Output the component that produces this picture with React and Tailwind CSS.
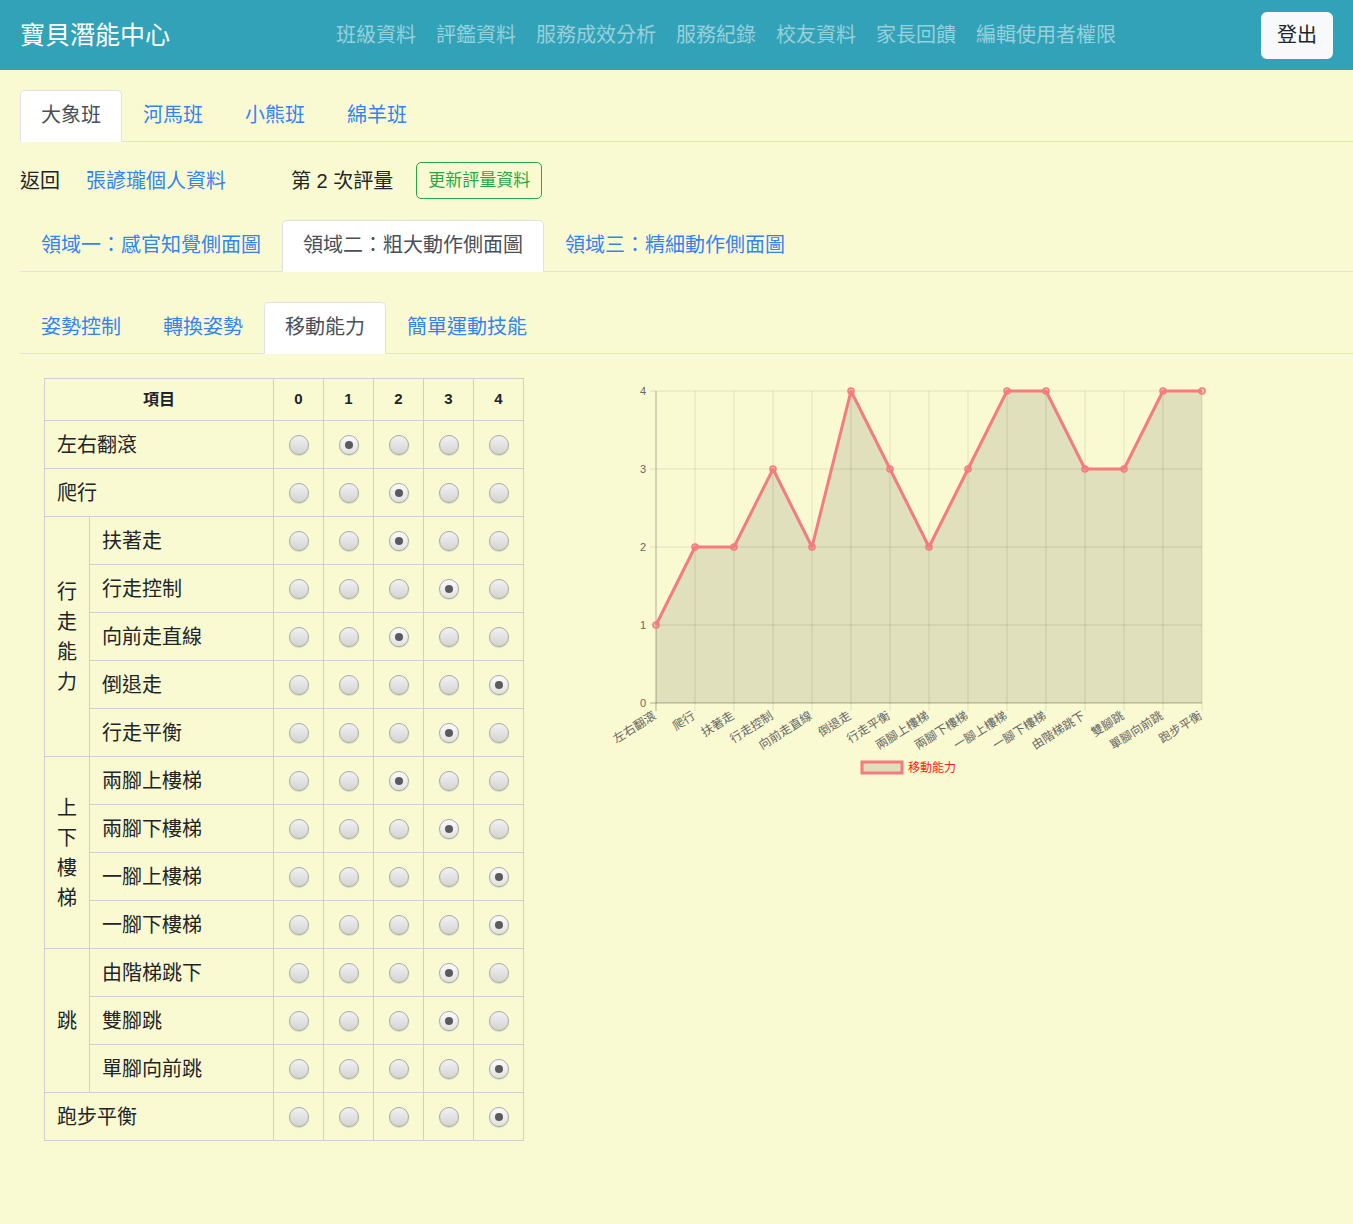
import React from 'react';

const navLinks = ['班級資料', '評鑑資料', '服務成效分析', '服務紀錄', '校友資料', '家長回饋', '編輯使用者權限'];
const classTabs = ['大象班', '河馬班', '小熊班', '綿羊班'];
const domainTabs = ['領域一：感官知覺側面圖', '領域二：粗大動作側面圖', '領域三：精細動作側面圖'];
const subTabs = ['姿勢控制', '轉換姿勢', '移動能力', '簡單運動技能'];

// 每個區塊：group 為 null 表示單列項目
const sections = [
    { group: null, items: [['左右翻滾', 1]] },
    { group: null, items: [['爬行', 2]] },
    { group: '行走能力', items: [['扶著走', 2], ['行走控制', 3], ['向前走直線', 2], ['倒退走', 4], ['行走平衡', 3]] },
    { group: '上下樓梯', items: [['兩腳上樓梯', 2], ['兩腳下樓梯', 3], ['一腳上樓梯', 4], ['一腳下樓梯', 4]] },
    { group: '跳', items: [['由階梯跳下', 3], ['雙腳跳', 3], ['單腳向前跳', 4]] },
    { group: null, items: [['跑步平衡', 4]] },
];

const allItems = sections.flatMap((s) => s.items);

const Tabs = ({ tabs, active }) => (
    <div className="flex border-b border-[#dee2e6]">
        {tabs.map((t, i) => (
            <div
                key={t}
                className={
                    i === active
                        ? 'px-5 py-[10px] text-[20px] leading-[29px] text-[#495057] bg-white border border-[#dee2e6] border-b-white rounded-t-[5px] -mb-px'
                        : 'px-5 py-[10px] text-[20px] leading-[29px] text-[#3483f5] border border-transparent'
                }
            >
                {t}
            </div>
        ))}
    </div>
);

const Radio = ({ checked }) => (
    <div
        className={
            checked
                ? 'mx-auto w-5 h-5 rounded-full border border-[#a9a9a9] bg-linear-to-b from-[#fbfbfb] to-[#e2e2e2] flex items-center justify-center shadow-[0_1px_1px_rgba(0,0,0,0.15)]'
                : 'mx-auto w-5 h-5 rounded-full border border-[#a9a9a9] bg-linear-to-b from-[#f1f1f1] to-[#d4d4d4] shadow-[0_1px_1px_rgba(0,0,0,0.15)]'
        }
    >
        {checked && <div className="w-2 h-2 rounded-full bg-[#5a5a5a]" />}
    </div>
);

const ScoreCells = ({ v }) =>
    [0, 1, 2, 3, 4].map((n) => (
        <td key={n} className="border border-[#cfcfcf] text-center align-middle">
            <Radio checked={n === v} />
        </td>
    ));

const Chart = () => {
    const left = 55, right = 601, top = 21, bottom = 333, unit = 78, step = 39;
    const pts = allItems.map(([, v], i) => [left + step * i, bottom - v * unit]);
    const line = pts.map((p) => p.join(',')).join(' ');
    const area = `${left},${bottom} ${line} ${right},${bottom}`;
    const stroke = '#f47b7e';

    return (
        <svg width="620" height="420" className="block" style={{ fontFamily: '"Liberation Sans", "Noto Sans CJK TC", sans-serif' }}>
            {[4, 3, 2, 1, 0].map((v) => {
                const y = bottom - v * unit;
                return (
                    <g key={v}>
                        <line x1={49} x2={right} y1={y} y2={y} stroke={v === 0 ? 'rgba(0,0,0,0.3)' : 'rgba(0,0,0,0.1)'} />
                        <text x={45} y={y + 4} textAnchor="end" fontSize="11" fill="#666">{v}</text>
                    </g>
                );
            })}
            {pts.map(([x], i) => (
                <line key={i} x1={x} x2={x} y1={top} y2={bottom + 8} stroke={i === 0 ? 'rgba(0,0,0,0.3)' : 'rgba(0,0,0,0.1)'} />
            ))}
            <polygon points={area} fill="rgba(0,0,0,0.1)" />
            <polyline points={line} fill="none" stroke={stroke} strokeWidth="3" strokeLinejoin="round" />
            {pts.map(([x, y], i) => (
                <circle key={i} cx={x} cy={y} r="3" fill="rgba(244,123,126,0.35)" stroke={stroke} strokeWidth="1.5" />
            ))}
            {allItems.map(([name], i) => {
                const x = left + step * i + 1;
                const y = 348;
                return (
                    <text key={name} x={x} y={y} textAnchor="end" fontSize="12" fill="#666" transform={`rotate(-32 ${x} ${y})`}>
                        {name}
                    </text>
                );
            })}
            <rect x={261} y={392} width={40} height={11} fill="#dfdfbb" stroke={stroke} strokeWidth="3" />
            <text x={307} y={402} fontSize="12" fill="#ff1a1a">移動能力</text>
        </svg>
    );
};

const App = () => {
    return (
        <div
            className="min-h-[1224px] bg-[#fafad2] text-[#212529]"
            style={{ fontFamily: '"Liberation Sans", "Noto Sans CJK TC", sans-serif' }}
        >
            {/* 導覽列 */}
            <nav className="h-[70px] bg-[#31a2b8] flex items-center px-5">
                <div className="text-[25px] text-white leading-none">寶貝潛能中心</div>
                <div className="flex gap-5 ml-[166px]">
                    {navLinks.map((l) => (
                        <span key={l} className="text-[20px] text-white/50">{l}</span>
                    ))}
                </div>
                <button className="ml-auto w-[72px] h-[47px] bg-[#f8f9fa] rounded-[6px] text-[20px] text-[#212529]">登出</button>
            </nav>

            <div className="pl-5">
                <div className="pt-5">
                    <Tabs tabs={classTabs} active={0} />
                </div>

                <div className="flex items-center h-[37px] mt-5 text-[20px]">
                    <span>返回</span>
                    <span className="ml-[26px] text-[#3483f5]">張諺瓏個人資料</span>
                    <span className="ml-[65px]">第 2 次評量</span>
                    <button className="ml-[23px] h-[37px] px-[11px] border border-[#28a745] rounded-[5px] text-[17px] text-[#28a745]">
                        更新評量資料
                    </button>
                </div>

                <div className="mt-[21px]">
                    <Tabs tabs={domainTabs} active={1} />
                </div>

                <div className="mt-[30px]">
                    <Tabs tabs={subTabs} active={2} />
                </div>

                <div className="flex items-start">
                    <table className="ml-6 mt-6 w-[479px] table-fixed border-collapse">
                        <colgroup>
                            <col className="w-[45px]" />
                            <col className="w-[184px]" />
                            <col className="w-[50px]" />
                            <col className="w-[50px]" />
                            <col className="w-[50px]" />
                            <col className="w-[50px]" />
                            <col className="w-[50px]" />
                        </colgroup>
                        <thead>
                            <tr className="h-[42px]">
                                <th colSpan={2} className="border border-[#cfcfcf] text-[16px] font-bold">項目</th>
                                {[0, 1, 2, 3, 4].map((n) => (
                                    <th key={n} className="border border-[#cfcfcf] text-[15px] font-bold">{n}</th>
                                ))}
                            </tr>
                        </thead>
                        <tbody>
                            {sections.map((s) =>
                                s.items.map(([name, v], i) => (
                                    <tr key={name} className="h-[48px] text-[20px]">
                                        {s.group === null ? (
                                            <td colSpan={2} className="border border-[#cfcfcf] px-3">{name}</td>
                                        ) : (
                                            <>
                                                {i === 0 && (
                                                    <td rowSpan={s.items.length} className="border border-[#cfcfcf] px-3 leading-[30px] align-middle">
                                                        {s.group}
                                                    </td>
                                                )}
                                                <td className="border border-[#cfcfcf] px-3">{name}</td>
                                            </>
                                        )}
                                        <ScoreCells v={v} />
                                    </tr>
                                ))
                            )}
                        </tbody>
                    </table>

                    <div className="ml-[77px] mt-4">
                        <Chart />
                    </div>
                </div>
            </div>
        </div>
    );
};

export default App;
